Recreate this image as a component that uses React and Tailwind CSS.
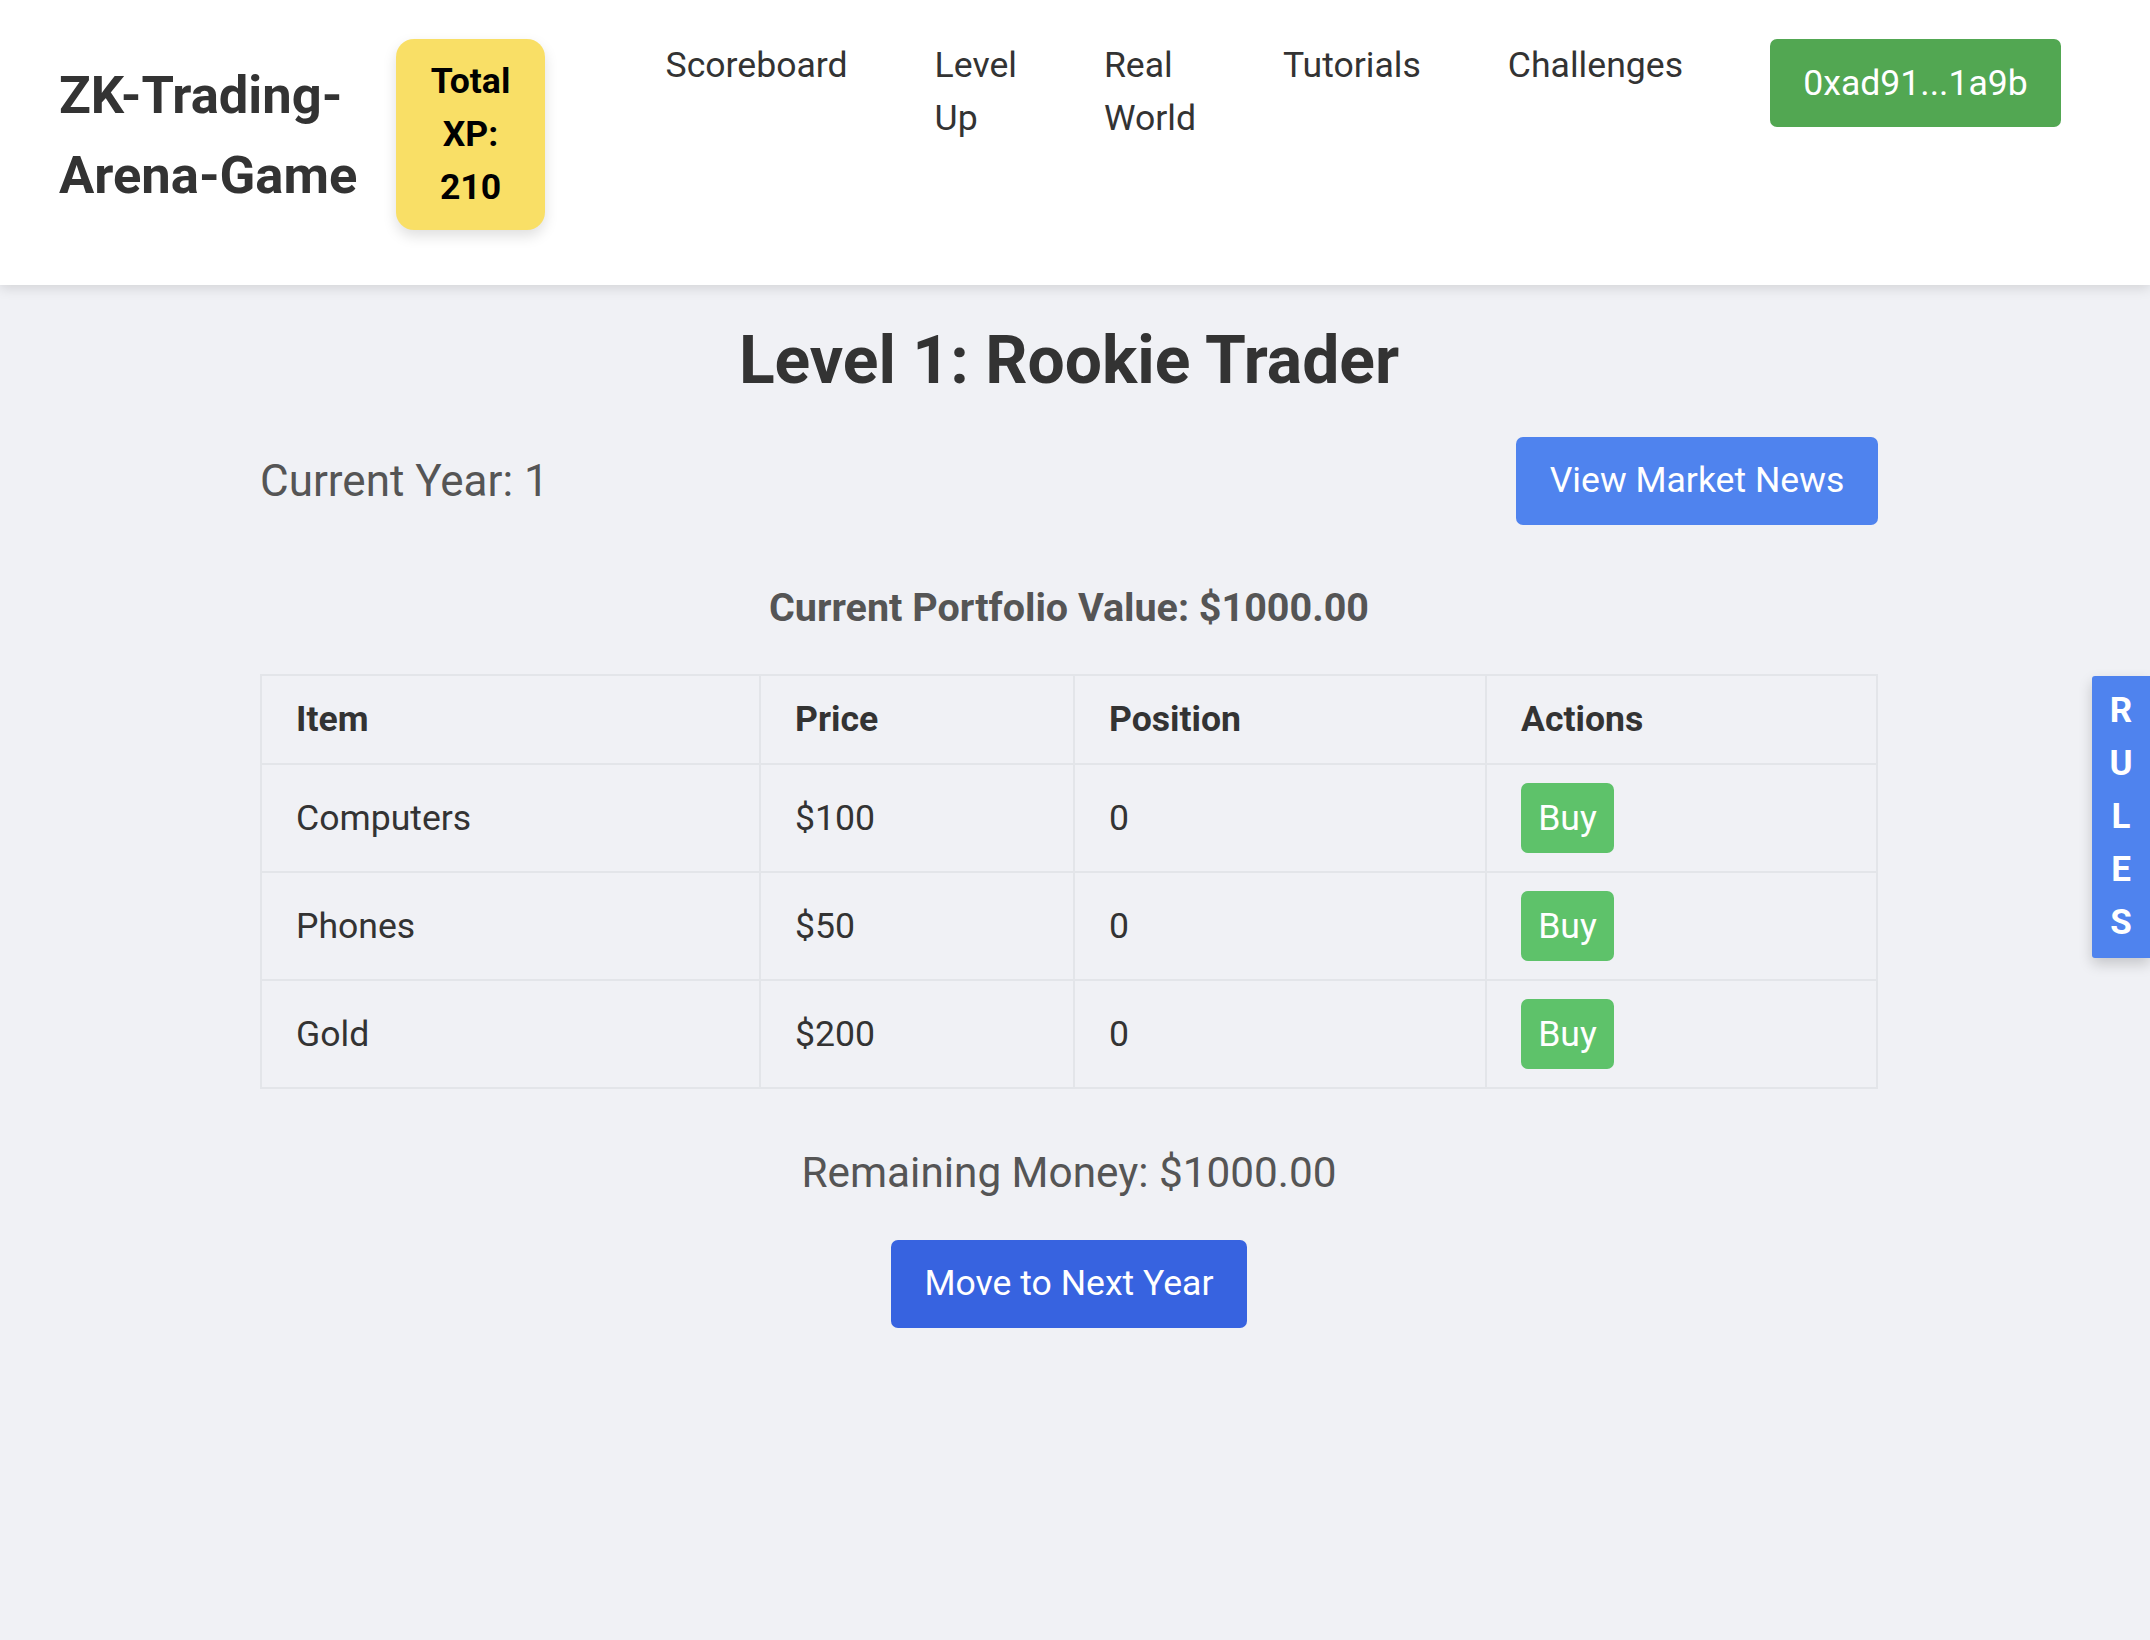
import React from "react";

const ROWS = [
  { item: "Computers", price: 100, position: 0 },
  { item: "Phones", price: 50, position: 0 },
  { item: "Gold", price: 200, position: 0 },
];

const NAV = ["Scoreboard", "Level Up", "Real World", "Tutorials", "Challenges"];

function Header() {
  return (
    <header className="relative z-10 flex h-[285px] items-start bg-white pl-[59px] pr-[89px] pt-[39px] shadow-[0_3px_12px_rgba(0,0,0,0.13)]">
      <div className="flex items-center">
        <h1 className="w-[302px] text-[52.5px] font-bold leading-[80px] text-[#333]">ZK-Trading-Arena-Game</h1>
        <div className="ml-[35px] w-[149px] rounded-[18px] bg-[#f9df66] px-[20px] py-[16px] text-center text-[35.6px] font-bold leading-[53px] text-black shadow-[0_6px_14px_rgba(0,0,0,0.13)]">
          Total XP: 210
        </div>
      </div>
      <nav className="ml-auto flex items-start gap-[87px]">
        {NAV.map((label) => (
          <a key={label} className="w-min cursor-pointer text-[35.6px] leading-[53px] text-[#333]">
            {label}
          </a>
        ))}
        <button className="h-[88px] w-[291px] rounded-[7px] bg-[#52a752] text-center text-[35.6px] leading-[53px] text-white">
          0xad91...1a9b
        </button>
      </nav>
    </header>
  );
}

function MarketTable() {
  return (
    <table className="mt-[37px] w-[1618px] table-fixed border-collapse border-2 border-[#e3e5e9] text-left text-[35.6px] leading-[53px] text-[#333]">
      <thead>
        <tr>
          <th className="w-[499px] border-2 border-[#e3e5e9] px-[34px] py-[17px] font-bold">Item</th>
          <th className="w-[314px] border-2 border-[#e3e5e9] px-[34px] py-[17px] font-bold">Price</th>
          <th className="w-[412px] border-2 border-[#e3e5e9] px-[34px] py-[17px] font-bold">Position</th>
          <th className="border-2 border-[#e3e5e9] px-[34px] py-[17px] font-bold">Actions</th>
        </tr>
      </thead>
      <tbody>
        {ROWS.map((r) => (
          <tr key={r.item}>
            <td className="border-2 border-[#e3e5e9] px-[34px] py-[18px]">{r.item}</td>
            <td className="border-2 border-[#e3e5e9] px-[34px] py-[18px]">${r.price}</td>
            <td className="border-2 border-[#e3e5e9] px-[34px] py-[18px]">{r.position}</td>
            <td className="border-2 border-[#e3e5e9] px-[34px] py-[18px]">
              <button className="flex h-[70px] w-[93px] items-center justify-center rounded-[7px] bg-[#5ec26a] text-[35.6px] text-white">
                Buy
              </button>
            </td>
          </tr>
        ))}
      </tbody>
    </table>
  );
}

export default function App() {
  return (
    <div className="relative min-h-screen bg-[#f0f1f5] font-['Roboto',sans-serif]">
      <Header />

      <main className="ml-[260px] flex w-[1618px] flex-col items-center">
        <h2 className="mt-[37px] text-[66px] font-bold leading-[78px] text-[#333]">Level 1: Rookie Trader</h2>

        <div className="mt-[37px] flex w-full items-center justify-between">
          <span className="text-[44px] leading-[64px] text-[#555]">Current Year: 1</span>
          <button className="h-[88px] w-[362px] rounded-[7px] bg-[#4f83ee] text-[35.6px] text-white">
            View Market News
          </button>
        </div>

        <p className="mt-[54px] text-[39.5px] font-bold leading-[58px] text-[#555]">
          Current Portfolio Value: $1000.00
        </p>

        <MarketTable />

        <p className="mt-[52px] text-[42.3px] leading-[64px] text-[#555]">Remaining Money: $1000.00</p>

        <button className="mt-[35px] h-[88px] w-[356px] rounded-[7px] bg-[#3763e0] text-[35.6px] text-white">
          Move to Next Year
        </button>
      </main>

      <div className="absolute right-0 top-[676px] flex h-[282px] w-[58px] flex-col items-center rounded-l-[3px] bg-[#4f83ee] py-[8px] text-[35px] font-bold leading-[53px] text-white shadow-[0_6px_14px_rgba(0,0,0,0.18)]">
        {"RULES".split("").map((ch, i) => (
          <span key={i}>{ch}</span>
        ))}
      </div>
    </div>
  );
}
